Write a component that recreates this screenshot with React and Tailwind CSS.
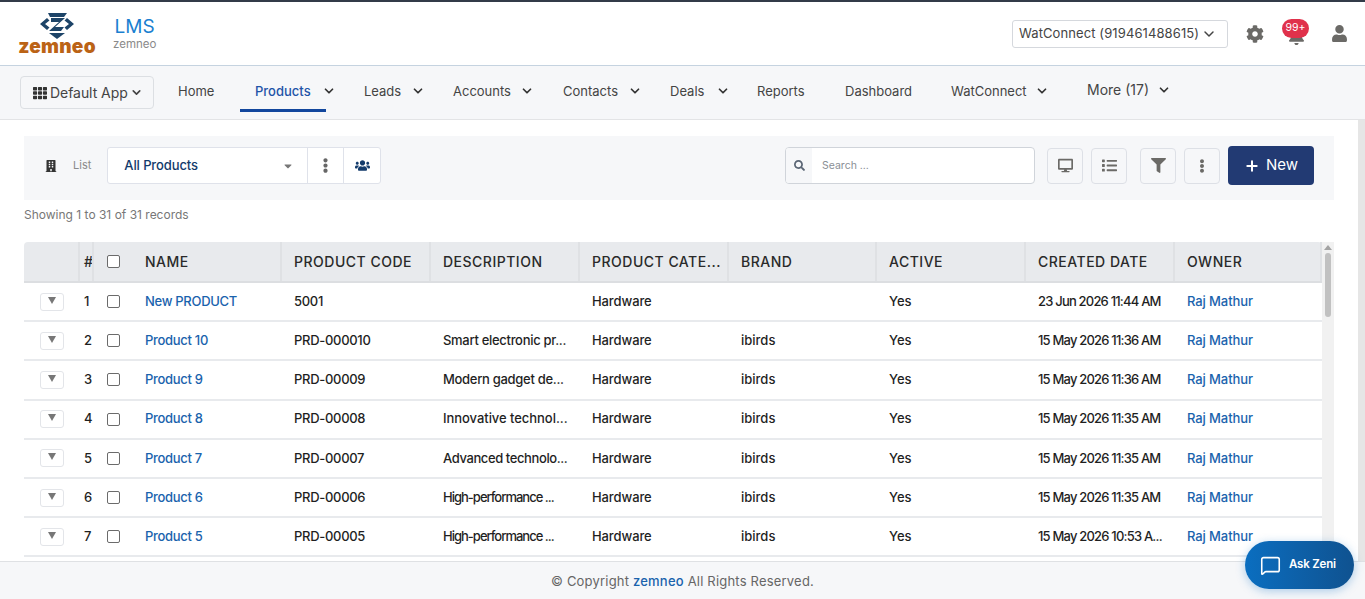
import React from "react";
import { ChevronDown, MessageSquare, Plus } from "lucide-react";
import {
  FaBell,
  FaBuilding,
  FaCaretDown,
  FaCog,
  FaDesktop,
  FaEllipsisV,
  FaFilter,
  FaList,
  FaSearch,
  FaTh,
  FaUser,
  FaUsers,
} from "react-icons/fa";

const navItems = [
  { label: "Home", w: "w-[77px]", box: "w-[77px]" },
  { label: "Products", w: "w-[109px]", box: "w-[86px]", active: true, menu: true, shift: "-ml-[4px]" },
  { label: "Leads", w: "w-[89px]", box: "w-[62px]", menu: true },
  { label: "Accounts", w: "w-[110px]", box: "w-[82px]", menu: true },
  { label: "Contacts", w: "w-[107px]", box: "w-[80px]", menu: true },
  { label: "Deals", w: "w-[87px]", box: "w-[61px]", menu: true },
  { label: "Reports", w: "w-[88px]", box: "w-[88px]" },
  { label: "Dashboard", w: "w-[106px]", box: "w-[106px]" },
  { label: "WatConnect", w: "w-[136px]", box: "w-[99px]", menu: true },
];

const headers = [
  "NAME",
  "PRODUCT CODE",
  "DESCRIPTION",
  "PRODUCT CATE...",
  "BRAND",
  "ACTIVE",
  "CREATED DATE",
  "OWNER",
];

const rows = [
  { name: "New PRODUCT", code: "5001", desc: "", track: "", brand: "", date: "23 Jun 2026 11:44 AM" },
  { name: "Product 10", code: "PRD-000010", desc: "Smart electronic pr...", track: "tracking-[-0.3px]", brand: "ibirds", date: "15 May 2026 11:36 AM" },
  { name: "Product 9", code: "PRD-00009", desc: "Modern gadget de...", track: "tracking-[-0.3px]", brand: "ibirds", date: "15 May 2026 11:36 AM" },
  { name: "Product 8", code: "PRD-00008", desc: "Innovative technol...", track: "tracking-[-0.05px]", brand: "ibirds", date: "15 May 2026 11:35 AM" },
  { name: "Product 7", code: "PRD-00007", desc: "Advanced technolo...", track: "tracking-[-0.4px]", brand: "ibirds", date: "15 May 2026 11:35 AM" },
  { name: "Product 6", code: "PRD-00006", desc: "High-performance ...", track: "tracking-[-1px]", brand: "ibirds", date: "15 May 2026 11:35 AM" },
  { name: "Product 5", code: "PRD-00005", desc: "High-performance ...", track: "tracking-[-1px]", brand: "ibirds", date: "15 May 2026 10:53 A..." },
];

const cols =
  "grid grid-cols-[56px_14px_39px_149px_149px_149px_149px_148px_149px_149px_147px]";

const Logo = () => (
  <div className="flex w-[78px] flex-col items-center">
    <svg width="34" height="26" viewBox="0 0 34 26">
      <path d="M8 0h19l-3 4H10z" fill="#1d4468" />
      <path d="M11 5h14L15 14h9l-3 4H9l10-9h-8z" fill="#1d4468" />
      <path d="M7 5L0 11l7 6 2.500-2.500L5 11l4.500-3.500zM27 5l7 6-7 6-2.500-2.500L29 11l-4.500-3.500z" fill="#1d4468" />
      <path d="M9 20h16l-8 6z" fill="#1d4468" />
    </svg>
    <span className="mt-[1px] text-[19px] leading-[14px] font-black tracking-[0.3px] text-[#bb6316]">
      zemneo
    </span>
  </div>
);

const CheckBox = () => (
  <span className="block h-[13px] w-[13px] rounded-[2px] border border-[#6b6b6b] bg-white" />
);

const IconBtn = ({ children }) => (
  <div className="flex h-[36px] w-[36px] items-center justify-center rounded border border-[#dde0e6] bg-[#f6f7f9] text-[#6b6a67]">
    {children}
  </div>
);

export default function App() {
  return (
    <div className="relative flex h-[599px] flex-col overflow-hidden bg-white font-['Inter',sans-serif] text-[13px] text-[#222]">
      <header className="flex h-[66px] shrink-0 items-center border-t-2 border-b border-t-[#333b48] border-b-[#c5d3e0] pr-[17px] pl-[18px]">
        <Logo />
        <div className="ml-[17px] flex flex-col items-center">
          <span className="text-[19px] leading-[22px] tracking-[0.1px] text-[#1a7fd0]">LMS</span>
          <span className="text-[11.5px] leading-[13px] text-[#8a8a8a]">zemneo</span>
        </div>
        <div className="mr-[1px] ml-auto flex h-[28px] w-[216px] items-center justify-between rounded-[3px] border border-[#d5d8dd] pr-[10px] pl-[6px] text-[13px] tracking-[0.1px] text-[#444]">
          <span>WatConnect (919461488615)</span>
          <ChevronDown size={16} strokeWidth={2.2} />
        </div>
        <FaCog size={18} className="ml-[17px] text-[#6b6a67]" />
        <div className="relative ml-[18px] flex h-[20px] w-[28px] items-center justify-center">
          <FaBell size={17} className="mt-[6px] text-[#6b6a67]" />
          <span className="absolute top-[-5px] left-0 flex h-[19px] w-[27px] items-center justify-center rounded-full bg-[#e0314b] text-[10.5px] leading-none text-white">
            99+
          </span>
        </div>
        <FaUser size={17} className="ml-[21px] text-[#6b6a67]" />
      </header>

      <nav className="flex h-[54px] shrink-0 items-start border-b border-[#e3e4e6] bg-[#f6f7f9] pl-[20px]">
        <div className="mt-[10px] flex h-[33px] w-[134px] items-center gap-[3px] rounded border border-[#dcdfe3] pl-[12px] text-[14px] tracking-[-0.05px] text-[#444]">
          <FaTh size={14} className="shrink-0 text-[#333]" />
          <span>Default App</span>
          <ChevronDown size={13} strokeWidth={3} className="-ml-[1px] shrink-0" />
        </div>
        <div className="ml-[9px] flex items-start">
          {navItems.map((item) => (
            <div key={item.label} className={`flex h-[50px] shrink-0 items-center ${item.w}`}>
              <div
                className={`h-[46px] shrink-0 self-start border-b-[3px] pt-[7px] pl-[15px] leading-[36px] whitespace-nowrap ${item.box} ${
                  item.active ? "border-[#12479d] font-medium text-[#1f54a8]" : "border-transparent text-[#444]"
                }`}
              >
                {item.label}
              </div>
              {item.menu && (
                <ChevronDown size={14} strokeWidth={3} className={`shrink-0 text-[#333] ${item.shift || ""}`} />
              )}
            </div>
          ))}
          <span className="ml-[15px] text-[14px] leading-[48px] text-[#444]">More (17)</span>
          <ChevronDown size={14} strokeWidth={3} className="mt-[17px] ml-[8px] text-[#333]" />
        </div>
      </nav>

      <main className="flex min-h-0 flex-1">
        <div className="min-w-0 flex-1 overflow-hidden pt-[16px] pr-[24px] pl-[24px]">
          <div className="flex h-[64px] items-center bg-[#f6f7f9] pr-[20px] pb-[5px]">
            <FaBuilding size={12} className="ml-[21px] text-[#333]" />
            <span className="ml-[16px] text-[11px] text-[#8a8a8a]">List</span>
            <div className="ml-[16px] flex h-[37px] w-[274px] items-stretch rounded-[3px] border border-[#dfe2ea] bg-white">
              <div className="flex w-[199px] items-center justify-between pr-[13px] pl-[16px] font-medium tracking-[-0.1px] text-[#123a6b]">
                <span>All Products</span>
                <FaCaretDown size={12} className="text-[#777]" />
              </div>
              <div className="flex w-[36px] items-center justify-center border-l border-[#dfe2ea] text-[#666]">
                <FaEllipsisV size={15} />
              </div>
              <div className="flex flex-1 items-center justify-center border-l border-[#dfe2ea] text-[#123a6b]">
                <FaUsers size={15} />
              </div>
            </div>
            <div className="ml-auto flex h-[37px] w-[250px] items-stretch overflow-hidden rounded border border-[#d0d4da] bg-white">
              <div className="flex w-[26px] items-center justify-center bg-[#f6f7f9] text-[#5b6675]">
                <FaSearch size={11} />
              </div>
              <span className="flex items-center pl-[10px] text-[10.5px] text-[#8a8f96]">Search ...</span>
            </div>
            <div className="ml-[12px] flex items-center gap-[8px]">
              <IconBtn>
                <FaDesktop size={15} />
              </IconBtn>
              <IconBtn>
                <FaList size={15} />
              </IconBtn>
            </div>
            <div className="ml-[13px]">
              <IconBtn>
                <FaFilter size={15} />
              </IconBtn>
            </div>
            <div className="ml-[8px]">
              <IconBtn>
                <FaEllipsisV size={14} />
              </IconBtn>
            </div>
            <div className="ml-[8px] flex h-[39px] w-[86px] items-center justify-center gap-[6px] rounded bg-[#223a73] text-[15px] text-white">
              <Plus size={16} strokeWidth={3} />
              <span>New</span>
            </div>
          </div>

          <p className="mt-[7px] text-[12px] leading-[15px] text-[#777]">
            Showing 1 to 31 of 31 records
          </p>

          <div className="mt-[20px] flex">
            <div className="min-w-0 flex-1">
              <div className={`${cols} h-[41px] rounded-t border-b-2 border-[#dcdee1] bg-[#e8eaed] text-[14px] font-medium tracking-[0.5px] text-[#2a2a2a]`}>
                <div className="border-r-2 border-[#dfe1e4]" />
                <div className="flex items-center overflow-hidden border-r-2 border-[#dfe1e4] pl-[4px]">#</div>
                <div className="flex items-center pl-[13px]">
                  <CheckBox />
                </div>
                {headers.map((h) => (
                  <div key={h} className="flex items-center border-r-2 border-[#dfe1e4] pl-[12px] whitespace-nowrap">
                    {h}
                  </div>
                ))}
              </div>
              {rows.map((row, i) => (
                <div key={row.name} className={`${cols} h-[39.2px] items-center border-b-2 border-[#e8eaed] text-[13px] font-medium text-[#1f1f1f]`}>
                  <div className="pl-[16px]">
                    <div className="flex h-[18px] w-[24px] justify-center rounded-[3px] border border-[#e3e5e9] pt-[3px]">
                      <span className="h-0 w-0 border-x-[4px] border-t-[7px] border-x-transparent border-t-[#777]" />
                    </div>
                  </div>
                  <div className="pl-[4px]">{i + 1}</div>
                  <div className="pl-[13px]">
                    <CheckBox />
                  </div>
                  <div className="pl-[12px] tracking-[-0.3px] text-[#1a63ad]">{row.name}</div>
                  <div className="pl-[12px] tracking-[-0.3px]">{row.code}</div>
                  <div className={`pl-[12px] whitespace-nowrap ${row.track}`}>{row.desc}</div>
                  <div className="pl-[12px] tracking-[-0.1px]">Hardware</div>
                  <div className="pl-[12px]">{row.brand}</div>
                  <div className="pl-[12px]">Yes</div>
                  <div className="pl-[12px] tracking-[-0.8px] whitespace-nowrap">{row.date}</div>
                  <div className="pl-[12px] tracking-[-0.1px] text-[#1a63ad]">Raj Mathur</div>
                </div>
              ))}
            </div>
            <div className="flex w-[12px] shrink-0 flex-col items-center bg-[#f1f1f1]">
              <span className="mt-[3px] h-0 w-0 border-x-[4px] border-b-[5px] border-x-transparent border-b-[#a3a3a3]" />
              <span className="mt-[3px] h-[64px] w-[6px] rounded-full bg-[#c1c1c1]" />
            </div>
          </div>
        </div>
        <div className="w-[7px] shrink-0 bg-[#e6e6e6]" />
      </main>

      <footer className="flex h-[38px] shrink-0 items-center justify-center border-t border-[#dfe1e4] bg-[#f6f7f9] pt-[2px] text-[13px] tracking-[0.2px] text-[#666]">
        © Copyright&nbsp;<span className="font-medium text-[#1a63ad]">zemneo</span>&nbsp;All Rights Reserved.
      </footer>

      <div className="absolute top-[541px] left-[1245px] flex h-[48px] w-[109px] items-center gap-[8px] rounded-full bg-gradient-to-r from-[#0a6ec0] to-[#0f5290] pl-[15px] text-[11.5px] font-semibold tracking-[-0.2px] text-white shadow-[0_2px_10px_rgba(30,120,200,0.35)]">
        <MessageSquare size={21} strokeWidth={1.8} />
        <span>Ask Zeni</span>
      </div>
    </div>
  );
}
